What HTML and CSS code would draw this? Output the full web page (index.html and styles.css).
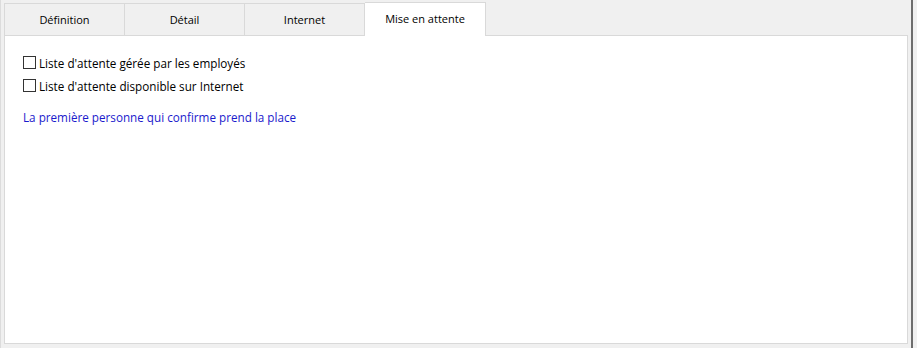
FILE: index.html
```html
<!DOCTYPE html>
<html lang="fr">
<head>
  <meta charset="UTF-8">
  <title>Mise en attente</title>
  <link rel="stylesheet" href="styles.css">
</head>
<body>
  <div class="window">
    <div class="tabs">
      <div class="tab">Définition</div>
      <div class="tab">Détail</div>
      <div class="tab">Internet</div>
      <div class="tab active">Mise en attente</div>
    </div>
    <div class="panel">
      <label class="check"><span class="box"></span>Liste d'attente gérée par les employés</label>
      <label class="check"><span class="box"></span>Liste d'attente disponible sur Internet</label>
      <p class="note">La première personne qui confirme prend la place</p>
    </div>
  </div>
</body>
</html>
```

FILE: styles.css
```css
body {
  margin: 0;
  background: #f0f0f0;
  font-family: 'Open Sans', 'DejaVu Sans', sans-serif;
  font-size: 11px;
  color: #000;
}

.window {
  width: 913px;
  height: 348px;
  border-left: 1px solid #dcdcdc;
  border-right: 2px solid #6d6d6d;
  box-sizing: border-box;
  padding: 0 3px 0 3px;
}

.tabs {
  display: flex;
  height: 35px;
  align-items: flex-end;
}

.tab {
  width: 119px;
  height: 31px;
  border: 1px solid #d9d9d9;
  border-bottom: none;
  border-right: none;
  background: #f0f0f0;
  display: flex;
  align-items: center;
  justify-content: center;
}

.tab:nth-child(3) {
  border-right: 1px solid #d9d9d9;
}

.tab.active {
  width: 121px;
  height: 34px;
  background: #fff;
  border-left: none;
  border-right: 1px solid #d9d9d9;
  padding-bottom: 3px;
  box-sizing: border-box;
  margin-bottom: -1px;
  position: relative;
}

.panel {
  height: 309px;
  background: #fff;
  border: 1px solid #d9d9d9;
  padding: 19px 18px;
  box-sizing: border-box;
  font-size: 11.7px;
}

.check {
  display: flex;
  align-items: center;
  height: 15px;
  margin-bottom: 8px;
}

.box {
  width: 11px;
  height: 11px;
  border: 1px solid #333;
  background: #fff;
  margin-right: 3px;
}

.note {
  margin: 16px 0 0;
  color: #1a1acc;
}
```
